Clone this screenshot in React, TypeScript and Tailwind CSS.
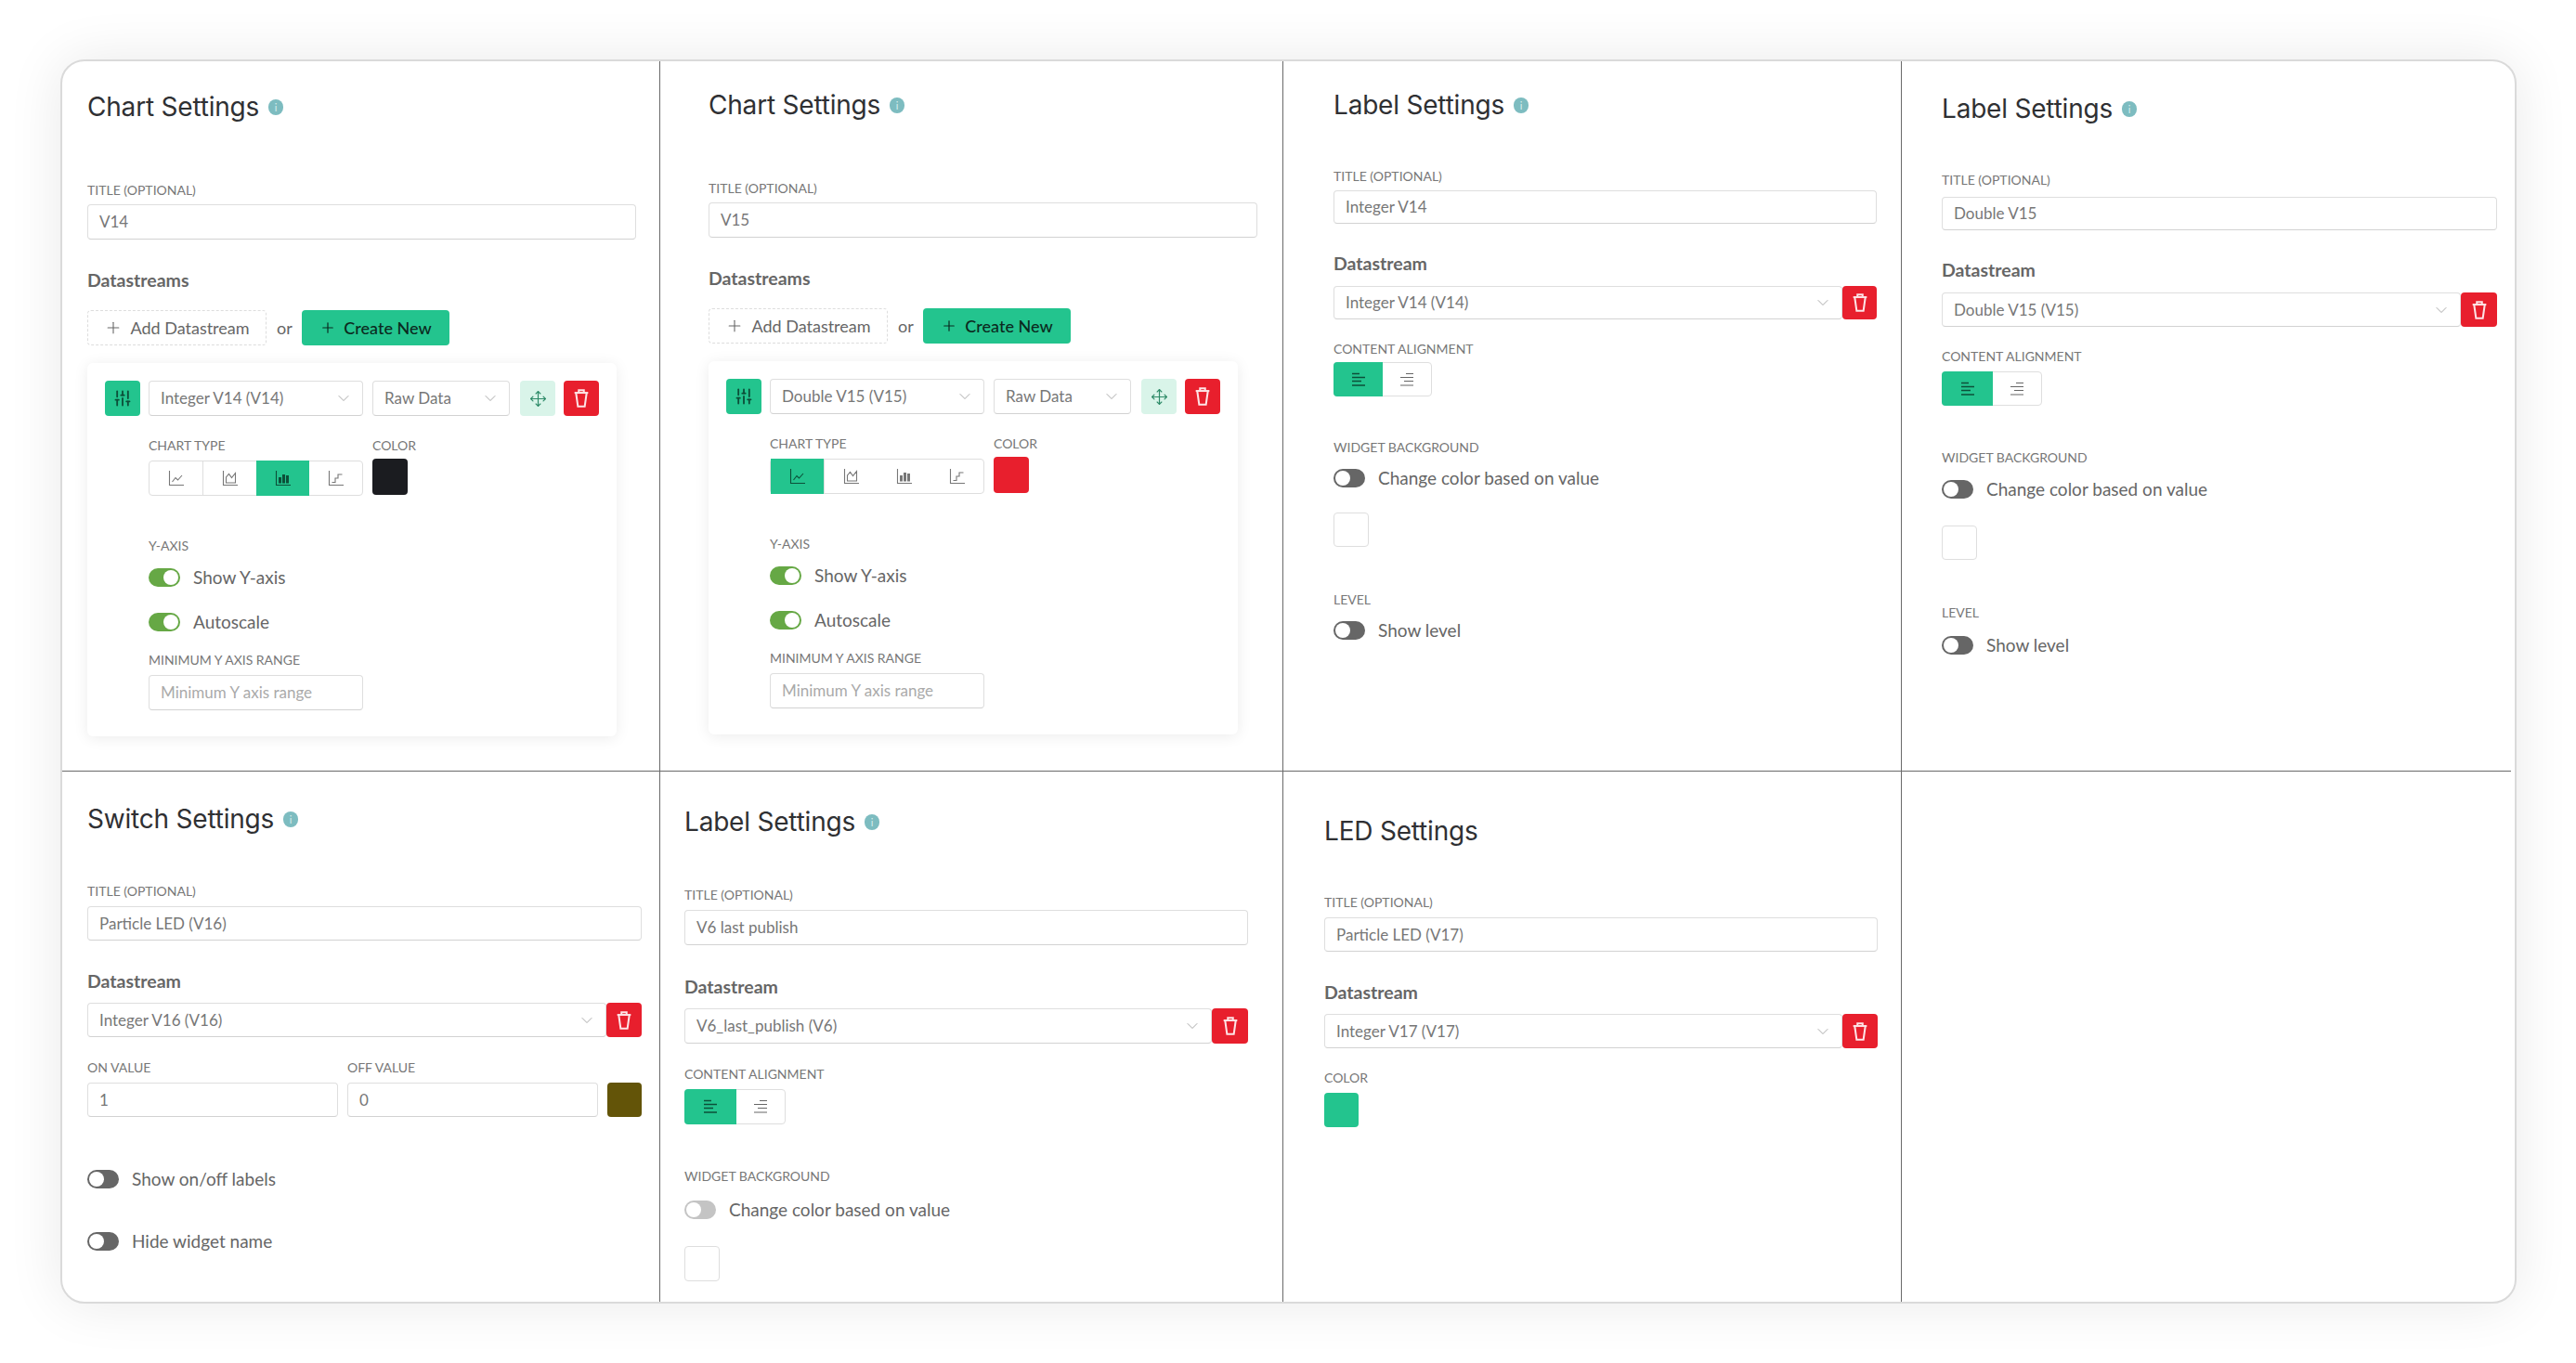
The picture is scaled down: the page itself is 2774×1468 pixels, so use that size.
import { ChevronDown, Move, Plus, SlidersVertical } from 'lucide-react';

const body = "font-['Lato','Liberation_Sans',sans-serif]";

function Title({ text, info = true }: { text: string; info?: boolean }) {
  return (
    <div className="flex h-[34px] items-center gap-[10px]">
      <h2 className="font-['Inter',sans-serif] text-[28px] leading-[34px] font-normal tracking-[-0.2px] text-[#2f3033]">{text}</h2>
      {info && (
        <span className="flex h-[17px] w-[16px] items-center justify-center rounded-full bg-[#7dbcc0] text-[11px] leading-none text-[#d9eeee]">
          i
        </span>
      )}
    </div>
  );
}

function Label({ text, className = '' }: { text: string; className?: string }) {
  return <div className={`h-[16px] text-[14px] leading-[16px] text-[#777] uppercase ${className}`}>{text}</div>;
}

function Heading({ text, className = '' }: { text: string; className?: string }) {
  return <h3 className={`h-[20px] text-[19.5px] leading-[20px] font-bold text-[#666] ${className}`}>{text}</h3>;
}

function Field({ text, className = '', muted = false }: { text: string; className?: string; muted?: boolean }) {
  return (
    <div
      className={`flex items-center rounded-[4px] border border-[#dedede] border-b-[#d2d2d2] bg-white pl-[12px] text-[17px] ${
        muted ? 'text-[#aaa]' : 'text-[#777]'
      } ${className}`}
    >
      {text}
    </div>
  );
}

function Select({ text, className = '' }: { text: string; className?: string }) {
  return (
    <div
      className={`flex items-center justify-between rounded-[4px] border border-[#dedede] border-b-[#d2d2d2] bg-white pr-[10px] pl-[12px] text-[17px] text-[#777] ${className}`}
    >
      <span>{text}</span>
      <ChevronDown size={20} strokeWidth={1} className="text-[#999]" />
    </div>
  );
}

function TrashIcon() {
  return (
    <svg width="22" height="22" viewBox="0 0 24 24" fill="none" stroke="#fde4e6" strokeWidth="2.2">
      <path d="M4 5.5H20" />
      <path d="M9 5V2.5H15V5" />
      <path d="M5.8 6L8 21.5H16L18.2 6" />
    </svg>
  );
}

function Trash({ className = '' }: { className?: string }) {
  return (
    <div className={`flex shrink-0 items-center justify-center rounded-[4px] bg-[#e81f2d] ${className}`}>
      <TrashIcon />
    </div>
  );
}

function StreamRow({ text, select, trash }: { text: string; select: string; trash: string }) {
  return (
    <div className="flex items-stretch">
      <Select text={text} className={select} />
      <Trash className={trash} />
    </div>
  );
}

function Toggle({ on = false, faded = false, text, className = '' }: { on?: boolean; faded?: boolean; text: string; className?: string }) {
  const track = on ? 'justify-end bg-[#66a845]' : faded ? 'bg-[#c4c4c4]' : 'bg-[#666]';
  return (
    <div className={`flex h-[20px] items-center gap-[14px] ${className}`}>
      <span className={`flex h-[20px] w-[34px] items-center rounded-full px-[2px] ${track}`}>
        <span className="h-[16px] w-[16px] rounded-full bg-white" />
      </span>
      <span className="text-[19px] text-[#666]">{text}</span>
    </div>
  );
}

function AlignGroup({ className = '', first = 'w-[53px]' }: { className?: string; first?: string }) {
  return (
    <div className={`flex rounded-[4px] border border-[#dedede] bg-white ${className}`}>
      <span className={`-m-px flex items-center justify-center rounded-l-[4px] bg-[#23c48e] ${first}`}>
        <svg width="16" height="16" viewBox="0 0 16 16" stroke="#0c4f39" strokeWidth="1.5">
          <path d="M1 1.5H9M1 5.5H15M1 9.5H11M1 14H15" />
        </svg>
      </span>
      <span className="flex flex-1 items-center justify-center">
        <svg width="16" height="16" viewBox="0 0 16 16" stroke="#666" strokeWidth="1.2">
          <path d="M7 1.5H15M1 5.5H15M5 9.5H15M1 14H15" />
        </svg>
      </span>
    </div>
  );
}

function ChartIcon({ kind, color }: { kind: number; color: string }) {
  return (
    <svg width="18" height="18" viewBox="0 0 18 18" fill="none" stroke={color} strokeWidth="1.1">
      <path d="M1.5 1V16.5H17" />
      {kind === 0 && <path d="M4.5 13L8 8.5L10.5 11L15 6" />}
      {kind === 1 && <path d="M4.5 14V8L7.5 4.5L10.5 8.5L14.5 3.5V14H4.5Z" />}
      {kind === 2 && (
        <g fill={color} stroke="none">
          <rect x="4" y="8" width="3" height="6.5" />
          <rect x="8" y="5" width="3" height="9.5" />
          <rect x="12" y="6" width="3" height="8.5" />
        </g>
      )}
      {kind === 3 && <path d="M4.5 13.5H8V9H11V5H15.5" />}
    </svg>
  );
}

function ChartTypes({ active }: { active: number }) {
  return (
    <div className="mt-[8px] flex h-[38px] w-[231px] rounded-[4px] border border-[#dedede] bg-white">
      {[0, 1, 2, 3].map((kind) => (
        <span
          key={kind}
          className={`-my-px flex flex-1 items-center justify-center ${kind === active ? 'bg-[#23c48e]' : ''} ${
            kind === 0 ? 'border-r border-r-[#dedede]' : ''
          }`}
        >
          <ChartIcon kind={kind} color={kind === active ? '#0c4f39' : '#777'} />
        </span>
      ))}
    </div>
  );
}

function ChartPanel({ value, stream, swatch, active, className }: { value: string; stream: string; swatch: string; active: number; className: string }) {
  return (
    <section className={`border-r border-b border-[#6a6a6a] ${className}`}>
      <Title text="Chart Settings" />
      <Label text="Title (optional)" className="mt-[65px]" />
      <Field text={value} className="mt-[7px] h-[38px] w-[591px]" />
      <Heading text="Datastreams" className="mt-[34px]" />
      <div className="mt-[22px] flex h-[38px] items-center">
        <div className="flex h-full w-[193px] items-center justify-center gap-[8px] rounded-[4px] border border-dashed border-[#ddd] text-[18px] text-[#666]">
          <Plus size={20} strokeWidth={1.3} />
          Add Datastream
        </div>
        <span className="ml-[11px] w-[27px] text-[18px] text-[#666]">or</span>
        <div className="flex h-full w-[159px] items-center justify-center gap-[8px] rounded-[4px] bg-[#23c48e] text-[18px] font-medium text-[#0b2a20]">
          <Plus size={18} strokeWidth={1.6} />
          Create New
        </div>
      </div>
      <div className="mt-[19px] w-[570px] rounded-[6px] bg-white pt-[19px] pr-[19px] pb-[28px] pl-[19px] shadow-[0_2px_16px_rgba(0,0,0,0.08)]">
        <div className="flex h-[38px] items-stretch">
          <span className="flex w-[38px] items-center justify-center rounded-[4px] bg-[#23c48e]">
            <SlidersVertical size={20} strokeWidth={2.2} className="text-[#0c4f39]" />
          </span>
          <Select text={stream} className="ml-[9px] w-[231px]" />
          <Select text="Raw Data" className="ml-[10px] w-[148px]" />
          <span className="ml-[11px] flex w-[38px] items-center justify-center rounded-[4px] bg-[#d9f4e9]">
            <Move size={19} strokeWidth={1.5} className="text-[#2e8b68]" />
          </span>
          <Trash className="ml-[9px] w-[38px]" />
        </div>
        <div className="mt-[24px] ml-[47px] flex gap-[10px]">
          <div className="w-[231px]">
            <Label text="Chart type" />
            <ChartTypes active={active} />
          </div>
          <div>
            <Label text="Color" />
            <span className={`mt-[6px] block h-[39px] w-[38px] rounded-[4px] ${swatch}`} />
          </div>
        </div>
        <div className="ml-[47px]">
          <Label text="Y-axis" className="mt-[46px]" />
          <Toggle on text="Show Y-axis" className="mt-[16px]" />
          <Toggle on text="Autoscale" className="mt-[28px]" />
          <Label text="Minimum Y axis range" className="mt-[23px]" />
          <Field text="Minimum Y axis range" muted className="mt-[8px] h-[38px] w-[231px]" />
        </div>
      </div>
    </section>
  );
}

export default function App() {
  return (
    <div className={`h-[1468px] w-[2774px] overflow-hidden bg-white pt-[64px] pl-[65px] ${body}`}>
      <div className="grid h-[1340px] w-[2645px] grid-cols-[644px_671px_666px_1fr] grid-rows-[765px_1fr] overflow-hidden rounded-[26px] border-2 border-[#dadada] bg-white pr-[4px] shadow-[0_0_60px_rgba(0,0,0,0.09)]">
        <ChartPanel value="V14" stream="Integer V14 (V14)" swatch="bg-[#1b1c20]" active={2} className="pt-[32px] pl-[27px]" />
        <ChartPanel value="V15" stream="Double V15 (V15)" swatch="bg-[#e81f2d]" active={0} className="pt-[30px] pl-[52px]" />

        <section className="border-r border-b border-[#6a6a6a] pt-[30px] pl-[54px]">
          <Title text="Label Settings" />
          <div className="w-[585px]">
            <Label text="Title (optional)" className="mt-[52px]" />
            <Field text="Integer V14" className="mt-[7px] h-[36px]" />
            <Heading text="Datastream" className="mt-[33px]" />
            <div className="mt-[14px]">
              <StreamRow text="Integer V14 (V14)" select="h-[36px] flex-1" trash="w-[37px]" />
            </div>
            <Label text="Content alignment" className="mt-[24px]" />
            <AlignGroup className="mt-[6px] h-[37px] w-[106px]" />
            <Label text="Widget background" className="mt-[47px]" />
            <Toggle text="Change color based on value" className="mt-[15px]" />
            <span className="mt-[27px] block h-[37px] w-[38px] rounded-[4px] border border-[#dedede]" />
            <Label text="Level" className="mt-[49px]" />
            <Toggle text="Show level" className="mt-[15px]" />
          </div>
        </section>

        <section className="border-b border-[#6a6a6a] pt-[34px] pl-[43px]">
          <Title text="Label Settings" />
          <div className="w-[598px]">
            <Label text="Title (optional)" className="mt-[52px]" />
            <Field text="Double V15" className="mt-[10px] h-[36px]" />
            <Heading text="Datastream" className="mt-[33px]" />
            <div className="mt-[14px]">
              <StreamRow text="Double V15 (V15)" select="h-[37px] flex-1" trash="w-[39px]" />
            </div>
            <Label text="Content alignment" className="mt-[24px]" />
            <AlignGroup className="mt-[8px] h-[37px] w-[108px]" first="w-[55px]" />
            <Label text="Widget background" className="mt-[48px]" />
            <Toggle text="Change color based on value" className="mt-[16px]" />
            <span className="mt-[29px] block h-[37px] w-[38px] rounded-[4px] border border-[#dedede]" />
            <Label text="Level" className="mt-[49px]" />
            <Toggle text="Show level" className="mt-[17px]" />
          </div>
        </section>

        <section className="border-r border-[#6a6a6a] pt-[34px] pl-[27px]">
          <Title text="Switch Settings" />
          <div className="w-[597px]">
            <Label text="Title (optional)" className="mt-[53px]" />
            <Field text="Particle LED (V16)" className="mt-[8px] h-[37px]" />
            <Heading text="Datastream" className="mt-[34px]" />
            <div className="mt-[13px]">
              <StreamRow text="Integer V16 (V16)" select="h-[37px] flex-1" trash="w-[38px]" />
            </div>
            <div className="mt-[25px] flex gap-[10px]">
              <div className="w-[270px]">
                <Label text="On value" />
                <Field text="1" className="mt-[8px] h-[37px]" />
              </div>
              <div className="w-[270px]">
                <Label text="Off value" />
                <Field text="0" className="mt-[8px] h-[37px]" />
              </div>
              <span className="mt-[24px] h-[37px] w-[37px] rounded-[4px] bg-[#635408]" />
            </div>
            <Toggle text="Show on/off labels" className="mt-[57px]" />
            <Toggle text="Hide widget name" className="mt-[47px]" />
          </div>
        </section>

        <section className="border-r border-[#6a6a6a] pt-[37px] pl-[26px]">
          <Title text="Label Settings" />
          <div className="w-[607px]">
            <Label text="Title (optional)" className="mt-[54px]" />
            <Field text="V6 last publish" className="mt-[8px] h-[38px]" />
            <Heading text="Datastream" className="mt-[35px]" />
            <div className="mt-[13px]">
              <StreamRow text="V6_last_publish (V6)" select="h-[38px] flex-1" trash="w-[39px]" />
            </div>
            <Label text="Content alignment" className="mt-[25px]" />
            <AlignGroup className="mt-[8px] h-[38px] w-[109px]" first="w-[56px]" />
            <Label text="Widget background" className="mt-[48px]" />
            <Toggle faded text="Change color based on value" className="mt-[18px]" />
            <span className="mt-[29px] block h-[38px] w-[38px] rounded-[4px] border border-[#dedede]" />
          </div>
        </section>

        <section className="border-r border-[#6a6a6a] pt-[47px] pl-[44px]">
          <Title text="LED Settings" info={false} />
          <div className="w-[596px]">
            <Label text="Title (optional)" className="mt-[52px]" />
            <Field text="Particle LED (V17)" className="mt-[8px] h-[37px]" />
            <Heading text="Datastream" className="mt-[34px]" />
            <div className="mt-[13px]">
              <StreamRow text="Integer V17 (V17)" select="h-[37px] flex-1" trash="w-[38px]" />
            </div>
            <Label text="Color" className="mt-[24px]" />
            <span className="mt-[8px] block h-[37px] w-[37px] rounded-[4px] bg-[#23c48e]" />
          </div>
        </section>

        <section />
      </div>
    </div>
  );
}
